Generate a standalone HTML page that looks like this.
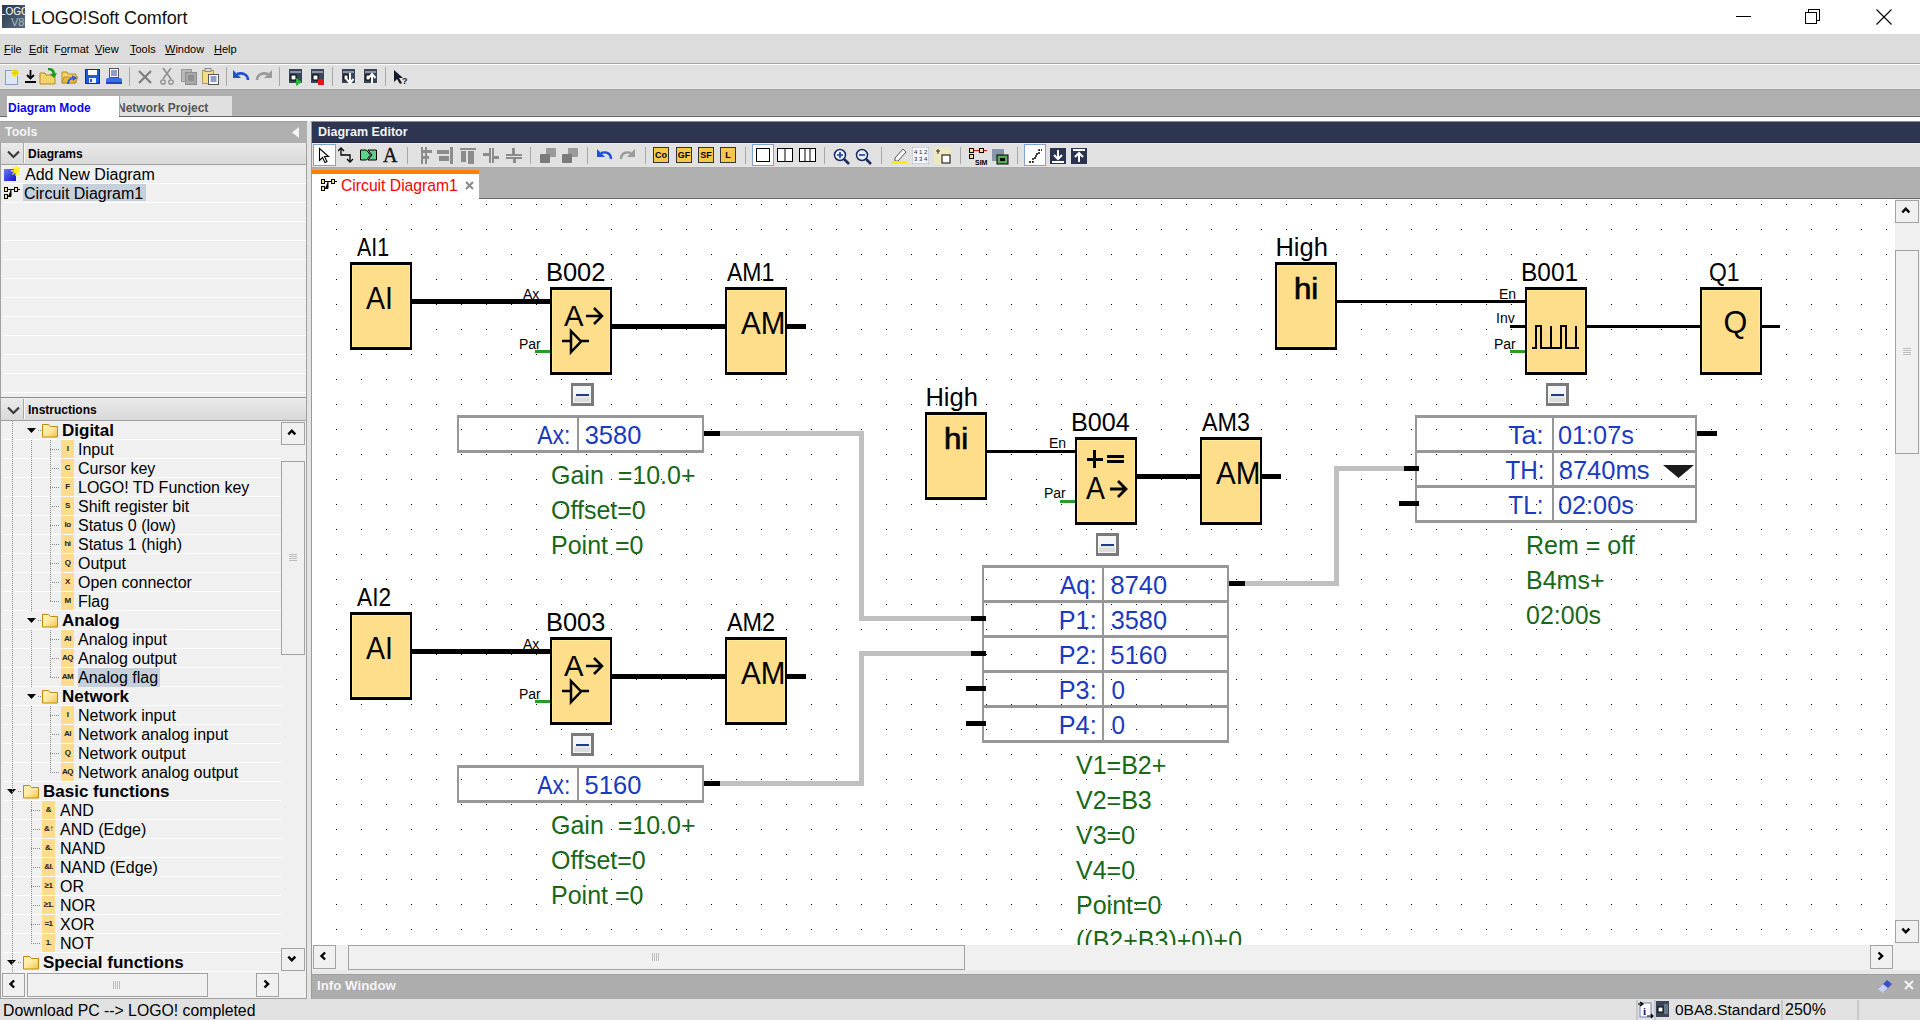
<!DOCTYPE html><html><head><meta charset="utf-8"><style>
*{margin:0;padding:0;box-sizing:border-box}
html,body{width:1920px;height:1020px;overflow:hidden;background:#fff;font-family:"Liberation Sans",sans-serif;}
.a{position:absolute}
.menu{top:34px;height:29px;line-height:29px;font-size:11px;color:#000}
.t16{font-size:16px;line-height:19px;color:#000;white-space:nowrap}
.dv{position:absolute;width:1px;background-image:linear-gradient(#8a8a8a 50%,transparent 50%);background-size:1px 2px}
.dh{position:absolute;height:1px;background-image:linear-gradient(90deg,#8a8a8a 50%,transparent 50%);background-size:2px 1px}
.ico{position:absolute;width:14px;height:18px;background:#ffdb8c;font-size:8px;font-weight:bold;text-align:center;line-height:12px;color:#111}
.sep{position:absolute;width:1px;background:#a8a8a8}
</style></head><body>
<div class="a" style="left:0px;top:0px;width:1920px;height:34px;background:#fff"></div>
<svg class="a" style="left:2px;top:5px" width="23" height="23" viewBox="0 0 23 23">
<defs><linearGradient id="lg1" x1="0" y1="0" x2="1" y2="1"><stop offset="0" stop-color="#24364a"/><stop offset="1" stop-color="#5d6f80"/></linearGradient></defs>
<rect width="23" height="23" fill="url(#lg1)"/>
<text x="-2" y="10" font-size="10" fill="#fff" font-family="Liberation Sans">LOGO</text>
<text x="9" y="21" font-size="11" fill="#aebbc4" font-family="Liberation Sans">V8</text></svg>
<div class="a" style="left:31px;top:7px;white-space:nowrap;font-size:18px;line-height:22px;color:#111;letter-spacing:-0.1px">LOGO!Soft Comfort</div>
<div class="a" style="left:1736px;top:16px;width:15px;height:1px;background:#000"></div>
<svg class="a" style="left:1800px;top:5px" width="24" height="22"><path d="M5.5 7.5h11v11h-11z M8.5 7.5v-3h11v11h-3" fill="none" stroke="#000" stroke-width="1" shape-rendering="crispEdges"/></svg>
<svg class="a" style="left:1876px;top:9px" width="16" height="16"><path d="M0.5 0.5L15.5 15.5M15.5 0.5L0.5 15.5" stroke="#000" stroke-width="1.1"/></svg>
<div class="a" style="left:0px;top:34px;width:1920px;height:29px;background:#dcdcdc"></div>
<div class="a" style="left:4px;top:35px;white-space:nowrap;height:29px;line-height:29px;font-size:11px;color:#000"><span style="text-decoration:underline">F</span>ile</div>
<div class="a" style="left:29px;top:35px;white-space:nowrap;height:29px;line-height:29px;font-size:11px;color:#000"><span style="text-decoration:underline">E</span>dit</div>
<div class="a" style="left:54px;top:35px;white-space:nowrap;height:29px;line-height:29px;font-size:11px;color:#000">F<span style="text-decoration:underline">o</span>rmat</div>
<div class="a" style="left:95px;top:35px;white-space:nowrap;height:29px;line-height:29px;font-size:11px;color:#000"><span style="text-decoration:underline">V</span>iew</div>
<div class="a" style="left:130px;top:35px;white-space:nowrap;height:29px;line-height:29px;font-size:11px;color:#000"><span style="text-decoration:underline">T</span>ools</div>
<div class="a" style="left:165px;top:35px;white-space:nowrap;height:29px;line-height:29px;font-size:11px;color:#000"><span style="text-decoration:underline">W</span>indow</div>
<div class="a" style="left:214px;top:35px;white-space:nowrap;height:29px;line-height:29px;font-size:11px;color:#000"><span style="text-decoration:underline">H</span>elp</div>
<div class="a" style="left:0px;top:63px;width:1920px;height:26px;background:#e1e1e1;border-top:1px solid #a4a4a4"></div>
<div class="a" style="left:0px;top:64px;width:1920px;height:1px;background:#fff"></div>
<div class="a" style="left:0px;top:88px;width:1920px;height:1px;background:#e6e6e6"></div>
<svg class="a" style="left:4px;top:68px" width="17" height="17" viewBox="0 0 17 17"><rect x="1.5" y="2.5" width="12" height="14" fill="#dfe6f5" stroke="#8a9cc0"/><path d="M11 1v8M7 5h8M8.2 2.2l5.6 5.6M13.8 2.2l-5.6 5.6" stroke="#ffe800" stroke-width="1.6"/><path d="M11 2v6M8 5h6" stroke="#c8b000" stroke-width="0.6"/></svg>
<svg class="a" style="left:25px;top:70px" width="11" height="13" viewBox="0 0 11 13"><path d="M5.5 0v8M2 5l3.5 3.5L9 5" fill="none" stroke="#000" stroke-width="1.8"/><rect x="0" y="11" width="11" height="2" fill="#000"/></svg>
<svg class="a" style="left:39px;top:68px" width="18" height="17" viewBox="0 0 18 17"><path d="M1 5h5l1 2h9v9H1z" fill="#f3d46a" stroke="#b48a1e"/><path d="M9 1c4 0 6 2 6 6" fill="none" stroke="#1a9a1a" stroke-width="2.5"/><path d="M11 6l4 4 3-5z" fill="#1a9a1a"/></svg>
<svg class="a" style="left:61px;top:68px" width="18" height="17" viewBox="0 0 18 17"><path d="M1 4h5l1 2h8v9H1z" fill="#f3d46a" stroke="#b48a1e"/><path d="M3 9h14l-3 6H1z" fill="#e8b83c" stroke="#b48a1e" stroke-width="0.8"/><path d="M7 16c0-4 3-6 6-6" fill="none" stroke="#2a5ce0" stroke-width="2.2"/><path d="M11 7l5 3-4 3z" fill="#2a5ce0"/></svg>
<svg class="a" style="left:85px;top:69px" width="15" height="15" viewBox="0 0 15 15"><rect x="0.5" y="0.5" width="14" height="14" fill="#1f5ad8" stroke="#0b3090"/><rect x="3" y="1" width="9" height="5" fill="#fff"/><rect x="4" y="9" width="7" height="5" fill="#e8eefc"/><rect x="5" y="10" width="2" height="3" fill="#1f5ad8"/></svg>
<svg class="a" style="left:106px;top:68px" width="16" height="17" viewBox="0 0 16 17"><rect x="3.5" y="0.5" width="9" height="9" fill="#fff" stroke="#555"/><path d="M5 3h6M5 5h6M5 7h6" stroke="#1a3aa0"/><rect x="0" y="10" width="16" height="6" rx="2" fill="#3a6ee8"/><rect x="0" y="14" width="16" height="2" fill="#1d48b8"/></svg>
<div class="sep" style="left:129px;top:67px;height:19px"></div>
<svg class="a" style="left:138px;top:70px" width="14" height="14" viewBox="0 0 14 14"><path d="M1 1L13 13M13 1L1 13" stroke="#7e7e7e" stroke-width="2.2"/></svg>
<svg class="a" style="left:160px;top:68px" width="14" height="17" viewBox="0 0 14 17"><path d="M3 0l8 11M11 0L3 11" stroke="#8e8e8e" stroke-width="1.6"/><circle cx="3" cy="14" r="2.2" fill="none" stroke="#8e8e8e" stroke-width="1.3"/><circle cx="11" cy="14" r="2.2" fill="none" stroke="#8e8e8e" stroke-width="1.3"/></svg>
<svg class="a" style="left:181px;top:69px" width="16" height="16" viewBox="0 0 16 16"><rect x="0.5" y="0.5" width="10" height="12" fill="#b8b8b8" stroke="#999"/><rect x="4.5" y="3.5" width="11" height="12" fill="#a8a8a8" stroke="#8e8e8e"/><path d="M7 7h6M7 9h6M7 11h6" stroke="#777"/></svg>
<svg class="a" style="left:202px;top:68px" width="17" height="17" viewBox="0 0 17 17"><rect x="0.5" y="2.5" width="11" height="13" fill="#f3dd8a" stroke="#b09a50"/><rect x="3" y="0.5" width="6" height="3" fill="#ddd" stroke="#888"/><rect x="6.5" y="6.5" width="10" height="10" fill="#fff" stroke="#555"/><path d="M8.5 9h6M8.5 11h6M8.5 13h6" stroke="#1a3aa0"/></svg>
<div class="sep" style="left:226px;top:67px;height:19px"></div>
<svg class="a" style="left:233px;top:69px" width="17" height="16" viewBox="0 0 17 16"><path d="M4 5c6-2 11 1 11 6" fill="none" stroke="#2050d8" stroke-width="2.6"/><path d="M0 1v8h8z" fill="#2050d8"/></svg>
<svg class="a" style="left:255px;top:69px" width="17" height="16" viewBox="0 0 17 16"><path d="M13 5c-6-2-11 1-11 6" fill="none" stroke="#9a9a9a" stroke-width="2.6"/><path d="M17 1v8h-8z" fill="#9a9a9a"/></svg>
<div class="sep" style="left:279px;top:67px;height:19px"></div>
<svg class="a" style="left:289px;top:69px" width="14" height="17" viewBox="0 0 14 17"><rect x="0" y="0" width="13" height="14" fill="#3a4658"/><rect x="1" y="2" width="11" height="2" fill="#8895a8"/><rect x="2" y="6" width="5" height="5" fill="#fff" stroke="#000"/><path d="M7 9l6 4-6 4z" fill="#22bb33"/></svg>
<svg class="a" style="left:311px;top:69px" width="14" height="17" viewBox="0 0 14 17"><rect x="0" y="0" width="13" height="14" fill="#3a4658"/><rect x="1" y="2" width="11" height="2" fill="#8895a8"/><rect x="2" y="6" width="5" height="5" fill="#fff" stroke="#000"/><rect x="7" y="10" width="6" height="6" fill="#ee1111"/></svg>
<div class="sep" style="left:332px;top:67px;height:19px"></div>
<svg class="a" style="left:342px;top:69px" width="13" height="16" viewBox="0 0 13 16"><rect x="0" y="0" width="13" height="14" fill="#3a4658"/><rect x="1" y="2" width="11" height="2" fill="#8895a8"/><rect x="2" y="6" width="4" height="5" fill="#fff" stroke="#000"/><path d="M8 4v10M4.5 10l3.5 4 3.5-4" fill="none" stroke="#fff" stroke-width="2"/></svg>
<svg class="a" style="left:364px;top:69px" width="13" height="16" viewBox="0 0 13 16"><rect x="0" y="0" width="13" height="14" fill="#3a4658"/><rect x="1" y="2" width="11" height="2" fill="#8895a8"/><rect x="2" y="6" width="4" height="5" fill="#fff" stroke="#000"/><path d="M8 15V5M4.5 9l3.5-4 3.5 4" fill="none" stroke="#fff" stroke-width="2"/></svg>
<div class="sep" style="left:385px;top:67px;height:19px"></div>
<svg class="a" style="left:393px;top:69px" width="16" height="16" viewBox="0 0 16 16"><path d="M1 1v12l3-3 3 5 2-1-3-5h4z" fill="#101830"/><text x="9" y="15" font-size="9" font-weight="bold" font-family="Liberation Sans" fill="#101830">?</text></svg>
<div class="a" style="left:0px;top:89px;width:1920px;height:28px;background:#afafaf;border-top:1px solid #a0a0a0;border-bottom:1px solid #666"></div>
<div class="a" style="left:0px;top:115px;width:1920px;height:1px;background:#b4b4b4"></div>
<div class="a" style="left:7px;top:96px;width:112px;height:21px;background:#fff"></div>
<div class="a" style="left:8px;top:100px;white-space:nowrap;font-size:12px;font-weight:bold;color:#0a0af0;line-height:16px">Diagram Mode</div>
<div class="a" style="left:119px;top:96px;width:113px;height:20px;background:#e0e0e0;border-left:1px solid #a8a8a8;overflow:hidden"><div style="margin-left:-3px;margin-top:4px;font-size:12px;font-weight:bold;color:#555;line-height:16px;white-space:nowrap">Network Project</div></div>
<div class="a" style="left:0px;top:117px;width:1920px;height:4px;background:#fff"></div>
<div class="a" style="left:0px;top:121px;width:307px;height:878px;background:#f0f0f0;border-left:1px solid #a0a0a0;border-right:1px solid #a0a0a0"></div>
<div class="a" style="left:307px;top:121px;width:5px;height:878px;background:#e4e4e4;border-right:1px solid #9a9a9a"></div>
<div class="a" style="left:0px;top:121px;width:307px;height:22px;background:#afafaf;border-top:1px solid #a0a0a0"></div>
<div class="a" style="left:5px;top:124px;white-space:nowrap;font-size:12.5px;font-weight:bold;color:#f4f4f4;line-height:16px">Tools</div>
<svg class="a" style="left:292px;top:127px" width="8" height="11" viewBox="0 0 8 11"><path d="M7 0v11L0 5.5z" fill="#f4f4f4"/></svg>
<div class="a" style="left:1px;top:143px;width:305px;height:22px;background:linear-gradient(#eaeaea,#d9d9d9);border-bottom:1px solid #a0a0a0"></div>
<div class="a" style="left:23px;top:143px;width:1px;height:20px;background:#a8a8a8"></div>
<div class="a" style="left:24px;top:143px;width:1px;height:20px;background:#fafafa"></div>
<svg class="a" style="left:7px;top:150px" width="13" height="9" viewBox="0 0 13 9"><path d="M1 1.5l5.5 5.5 5.5-5.5" fill="none" stroke="#3a3a3a" stroke-width="2.2"/></svg>
<div class="a" style="left:28px;top:146px;white-space:nowrap;font-size:12px;font-weight:bold;color:#000;line-height:16px">Diagrams</div>
<div class="a" style="left:4px;top:183px;width:302px;height:1px;background:#fff"></div>
<div class="a" style="left:4px;top:202px;width:302px;height:1px;background:#fff"></div>
<div class="a" style="left:4px;top:221px;width:302px;height:1px;background:#fff"></div>
<div class="a" style="left:4px;top:240px;width:302px;height:1px;background:#fff"></div>
<div class="a" style="left:4px;top:259px;width:302px;height:1px;background:#fff"></div>
<div class="a" style="left:4px;top:278px;width:302px;height:1px;background:#fff"></div>
<div class="a" style="left:4px;top:297px;width:302px;height:1px;background:#fff"></div>
<div class="a" style="left:4px;top:316px;width:302px;height:1px;background:#fff"></div>
<div class="a" style="left:4px;top:335px;width:302px;height:1px;background:#fff"></div>
<div class="a" style="left:4px;top:354px;width:302px;height:1px;background:#fff"></div>
<div class="a" style="left:4px;top:373px;width:302px;height:1px;background:#fff"></div>
<div class="a" style="left:4px;top:392px;width:302px;height:1px;background:#fff"></div>
<svg class="a" style="left:4px;top:166px" width="16" height="16" viewBox="0 0 16 16"><defs><linearGradient id="bl" x1="0" y1="0" x2="1" y2="1"><stop offset="0" stop-color="#6a7cff"/><stop offset="1" stop-color="#1010c0"/></linearGradient></defs><rect x="0" y="3" width="12" height="12" fill="url(#bl)"/><path d="M12 0v10M7 5h10M8.5 1.5l7 7M15.5 1.5l-7 7" stroke="#ffee00" stroke-width="1.4"/></svg>
<div class="a" style="left:25px;top:165px;white-space:nowrap;font-size:16px;line-height:19px;color:#000">Add New Diagram</div>
<div class="a" style="left:23px;top:184px;width:123px;height:17px;background:#c5d0db"></div>
<svg class="a" style="left:4px;top:187px" width="16" height="12" viewBox="0 0 16 12"><rect x="0.5" y="0.5" width="3" height="4" fill="#ffe08a" stroke="#000"/><rect x="0.5" y="7.5" width="3" height="4" fill="#ffe08a" stroke="#000"/><rect x="10.5" y="0.5" width="3" height="4" fill="#ffe08a" stroke="#000"/><path d="M4 2.5h6M7 2.5v7H4M14 2.5h2" stroke="#000"/></svg>
<div class="a" style="left:24px;top:184px;white-space:nowrap;font-size:16px;line-height:19px;color:#000">Circuit Diagram1</div>
<div class="a" style="left:1px;top:397px;width:305px;height:1px;background:#8c8c8c"></div>
<div class="a" style="left:1px;top:399px;width:305px;height:22px;background:linear-gradient(#eaeaea,#d9d9d9);border-bottom:1px solid #a0a0a0"></div>
<div class="a" style="left:23px;top:399px;width:1px;height:20px;background:#a8a8a8"></div>
<div class="a" style="left:24px;top:399px;width:1px;height:20px;background:#fafafa"></div>
<svg class="a" style="left:7px;top:406px" width="13" height="9" viewBox="0 0 13 9"><path d="M1 1.5l5.5 5.5 5.5-5.5" fill="none" stroke="#3a3a3a" stroke-width="2.2"/></svg>
<div class="a" style="left:28px;top:402px;white-space:nowrap;font-size:12px;font-weight:bold;color:#000;line-height:16px">Instructions</div>
<div class="a" style="left:1px;top:421px;width:280px;height:551px;overflow:hidden">
<div class="a" style="left:3px;top:18px;width:277px;height:1px;background:#fff"></div>
<svg class="a" style="left:26px;top:7px" width="9" height="6"><path d="M0 0h9L4.5 5z" fill="#000"/></svg>
<div class="dh" style="left:37px;top:9px;width:4px"></div>
<svg class="a" style="left:41px;top:2px" width="16" height="15"><defs><linearGradient id="fg0" x1="0" y1="0" x2="1" y2="1"><stop offset="0" stop-color="#fff2b8"/><stop offset="0.5" stop-color="#ffe9a0"/><stop offset="1" stop-color="#f0c040"/></linearGradient></defs><path d="M0.5 1.5h6l2 2h7v10.5h-15z" fill="url(#fg0)" stroke="#c08a10"/></svg>
<div class="a" style="left:61px;top:0px;font-size:17px;font-weight:bold;line-height:19px;color:#000;white-space:nowrap">Digital</div>
<div class="a" style="left:3px;top:37px;width:277px;height:1px;background:#fff"></div>
<div class="a" style="left:60px;top:19px;width:13px;height:18px;background:#ffdb8c"></div>
<div class="a" style="left:59px;top:22px;width:15px;text-align:center;font-size:8px;font-weight:bold;line-height:12px;color:#222;white-space:nowrap;letter-spacing:-0.5px">I</div>
<div class="dh" style="left:49px;top:28px;width:10px"></div>
<div class="a" style="left:77px;top:19px;font-size:16px;line-height:19px;color:#000;white-space:nowrap;padding-right:2px">Input</div>
<div class="a" style="left:3px;top:56px;width:277px;height:1px;background:#fff"></div>
<div class="a" style="left:60px;top:38px;width:13px;height:18px;background:#ffdb8c"></div>
<div class="a" style="left:59px;top:41px;width:15px;text-align:center;font-size:8px;font-weight:bold;line-height:12px;color:#222;white-space:nowrap;letter-spacing:-0.5px">C</div>
<div class="dh" style="left:49px;top:47px;width:10px"></div>
<div class="a" style="left:77px;top:38px;font-size:16px;line-height:19px;color:#000;white-space:nowrap;padding-right:2px">Cursor key</div>
<div class="a" style="left:3px;top:75px;width:277px;height:1px;background:#fff"></div>
<div class="a" style="left:60px;top:57px;width:13px;height:18px;background:#ffdb8c"></div>
<div class="a" style="left:59px;top:60px;width:15px;text-align:center;font-size:8px;font-weight:bold;line-height:12px;color:#222;white-space:nowrap;letter-spacing:-0.5px">F</div>
<div class="dh" style="left:49px;top:66px;width:10px"></div>
<div class="a" style="left:77px;top:57px;font-size:16px;line-height:19px;color:#000;white-space:nowrap;padding-right:2px">LOGO! TD Function key</div>
<div class="a" style="left:3px;top:94px;width:277px;height:1px;background:#fff"></div>
<div class="a" style="left:60px;top:76px;width:13px;height:18px;background:#ffdb8c"></div>
<div class="a" style="left:59px;top:79px;width:15px;text-align:center;font-size:8px;font-weight:bold;line-height:12px;color:#222;white-space:nowrap;letter-spacing:-0.5px">S</div>
<div class="dh" style="left:49px;top:85px;width:10px"></div>
<div class="a" style="left:77px;top:76px;font-size:16px;line-height:19px;color:#000;white-space:nowrap;padding-right:2px">Shift register bit</div>
<div class="a" style="left:3px;top:113px;width:277px;height:1px;background:#fff"></div>
<div class="a" style="left:60px;top:95px;width:13px;height:18px;background:#ffdb8c"></div>
<div class="a" style="left:59px;top:98px;width:15px;text-align:center;font-size:8px;font-weight:bold;line-height:12px;color:#222;white-space:nowrap;letter-spacing:-0.5px">lo</div>
<div class="dh" style="left:49px;top:104px;width:10px"></div>
<div class="a" style="left:77px;top:95px;font-size:16px;line-height:19px;color:#000;white-space:nowrap;padding-right:2px">Status 0 (low)</div>
<div class="a" style="left:3px;top:132px;width:277px;height:1px;background:#fff"></div>
<div class="a" style="left:60px;top:114px;width:13px;height:18px;background:#ffdb8c"></div>
<div class="a" style="left:59px;top:117px;width:15px;text-align:center;font-size:8px;font-weight:bold;line-height:12px;color:#222;white-space:nowrap;letter-spacing:-0.5px">hi</div>
<div class="dh" style="left:49px;top:123px;width:10px"></div>
<div class="a" style="left:77px;top:114px;font-size:16px;line-height:19px;color:#000;white-space:nowrap;padding-right:2px">Status 1 (high)</div>
<div class="a" style="left:3px;top:151px;width:277px;height:1px;background:#fff"></div>
<div class="a" style="left:60px;top:133px;width:13px;height:18px;background:#ffdb8c"></div>
<div class="a" style="left:59px;top:136px;width:15px;text-align:center;font-size:8px;font-weight:bold;line-height:12px;color:#222;white-space:nowrap;letter-spacing:-0.5px">Q</div>
<div class="dh" style="left:49px;top:142px;width:10px"></div>
<div class="a" style="left:77px;top:133px;font-size:16px;line-height:19px;color:#000;white-space:nowrap;padding-right:2px">Output</div>
<div class="a" style="left:3px;top:170px;width:277px;height:1px;background:#fff"></div>
<div class="a" style="left:60px;top:152px;width:13px;height:18px;background:#ffdb8c"></div>
<div class="a" style="left:59px;top:155px;width:15px;text-align:center;font-size:8px;font-weight:bold;line-height:12px;color:#222;white-space:nowrap;letter-spacing:-0.5px">X</div>
<div class="dh" style="left:49px;top:161px;width:10px"></div>
<div class="a" style="left:77px;top:152px;font-size:16px;line-height:19px;color:#000;white-space:nowrap;padding-right:2px">Open connector</div>
<div class="a" style="left:3px;top:189px;width:277px;height:1px;background:#fff"></div>
<div class="a" style="left:60px;top:171px;width:13px;height:18px;background:#ffdb8c"></div>
<div class="a" style="left:59px;top:174px;width:15px;text-align:center;font-size:8px;font-weight:bold;line-height:12px;color:#222;white-space:nowrap;letter-spacing:-0.5px">M</div>
<div class="dh" style="left:49px;top:180px;width:10px"></div>
<div class="a" style="left:77px;top:171px;font-size:16px;line-height:19px;color:#000;white-space:nowrap;padding-right:2px">Flag</div>
<div class="a" style="left:3px;top:208px;width:277px;height:1px;background:#fff"></div>
<svg class="a" style="left:26px;top:197px" width="9" height="6"><path d="M0 0h9L4.5 5z" fill="#000"/></svg>
<div class="dh" style="left:37px;top:199px;width:4px"></div>
<svg class="a" style="left:41px;top:192px" width="16" height="15"><defs><linearGradient id="fg10" x1="0" y1="0" x2="1" y2="1"><stop offset="0" stop-color="#fff2b8"/><stop offset="0.5" stop-color="#ffe9a0"/><stop offset="1" stop-color="#f0c040"/></linearGradient></defs><path d="M0.5 1.5h6l2 2h7v10.5h-15z" fill="url(#fg10)" stroke="#c08a10"/></svg>
<div class="a" style="left:61px;top:190px;font-size:17px;font-weight:bold;line-height:19px;color:#000;white-space:nowrap">Analog</div>
<div class="a" style="left:3px;top:227px;width:277px;height:1px;background:#fff"></div>
<div class="a" style="left:60px;top:209px;width:13px;height:18px;background:#ffdb8c"></div>
<div class="a" style="left:59px;top:212px;width:15px;text-align:center;font-size:8px;font-weight:bold;line-height:12px;color:#222;white-space:nowrap;letter-spacing:-0.5px">AI</div>
<div class="dh" style="left:49px;top:218px;width:10px"></div>
<div class="a" style="left:77px;top:209px;font-size:16px;line-height:19px;color:#000;white-space:nowrap;padding-right:2px">Analog input</div>
<div class="a" style="left:3px;top:246px;width:277px;height:1px;background:#fff"></div>
<div class="a" style="left:60px;top:228px;width:13px;height:18px;background:#ffdb8c"></div>
<div class="a" style="left:59px;top:231px;width:15px;text-align:center;font-size:8px;font-weight:bold;line-height:12px;color:#222;white-space:nowrap;letter-spacing:-0.5px">AQ</div>
<div class="dh" style="left:49px;top:237px;width:10px"></div>
<div class="a" style="left:77px;top:228px;font-size:16px;line-height:19px;color:#000;white-space:nowrap;padding-right:2px">Analog output</div>
<div class="a" style="left:3px;top:265px;width:277px;height:1px;background:#fff"></div>
<div class="a" style="left:60px;top:247px;width:13px;height:18px;background:#ffdb8c"></div>
<div class="a" style="left:59px;top:250px;width:15px;text-align:center;font-size:8px;font-weight:bold;line-height:12px;color:#222;white-space:nowrap;letter-spacing:-0.5px">AM</div>
<div class="dh" style="left:49px;top:256px;width:10px"></div>
<div class="a" style="left:77px;top:247px;font-size:16px;line-height:19px;color:#000;white-space:nowrap;background:#c5d0db;padding-right:2px">Analog flag</div>
<div class="a" style="left:3px;top:284px;width:277px;height:1px;background:#fff"></div>
<svg class="a" style="left:26px;top:273px" width="9" height="6"><path d="M0 0h9L4.5 5z" fill="#000"/></svg>
<div class="dh" style="left:37px;top:275px;width:4px"></div>
<svg class="a" style="left:41px;top:268px" width="16" height="15"><defs><linearGradient id="fg14" x1="0" y1="0" x2="1" y2="1"><stop offset="0" stop-color="#fff2b8"/><stop offset="0.5" stop-color="#ffe9a0"/><stop offset="1" stop-color="#f0c040"/></linearGradient></defs><path d="M0.5 1.5h6l2 2h7v10.5h-15z" fill="url(#fg14)" stroke="#c08a10"/></svg>
<div class="a" style="left:61px;top:266px;font-size:17px;font-weight:bold;line-height:19px;color:#000;white-space:nowrap">Network</div>
<div class="a" style="left:3px;top:303px;width:277px;height:1px;background:#fff"></div>
<div class="a" style="left:60px;top:285px;width:13px;height:18px;background:#ffdb8c"></div>
<div class="a" style="left:59px;top:288px;width:15px;text-align:center;font-size:8px;font-weight:bold;line-height:12px;color:#222;white-space:nowrap;letter-spacing:-0.5px">I</div>
<div class="dh" style="left:49px;top:294px;width:10px"></div>
<div class="a" style="left:77px;top:285px;font-size:16px;line-height:19px;color:#000;white-space:nowrap;padding-right:2px">Network input</div>
<div class="a" style="left:3px;top:322px;width:277px;height:1px;background:#fff"></div>
<div class="a" style="left:60px;top:304px;width:13px;height:18px;background:#ffdb8c"></div>
<div class="a" style="left:59px;top:307px;width:15px;text-align:center;font-size:8px;font-weight:bold;line-height:12px;color:#222;white-space:nowrap;letter-spacing:-0.5px">AI</div>
<div class="dh" style="left:49px;top:313px;width:10px"></div>
<div class="a" style="left:77px;top:304px;font-size:16px;line-height:19px;color:#000;white-space:nowrap;padding-right:2px">Network analog input</div>
<div class="a" style="left:3px;top:341px;width:277px;height:1px;background:#fff"></div>
<div class="a" style="left:60px;top:323px;width:13px;height:18px;background:#ffdb8c"></div>
<div class="a" style="left:59px;top:326px;width:15px;text-align:center;font-size:8px;font-weight:bold;line-height:12px;color:#222;white-space:nowrap;letter-spacing:-0.5px">Q</div>
<div class="dh" style="left:49px;top:332px;width:10px"></div>
<div class="a" style="left:77px;top:323px;font-size:16px;line-height:19px;color:#000;white-space:nowrap;padding-right:2px">Network output</div>
<div class="a" style="left:3px;top:360px;width:277px;height:1px;background:#fff"></div>
<div class="a" style="left:60px;top:342px;width:13px;height:18px;background:#ffdb8c"></div>
<div class="a" style="left:59px;top:345px;width:15px;text-align:center;font-size:8px;font-weight:bold;line-height:12px;color:#222;white-space:nowrap;letter-spacing:-0.5px">AQ</div>
<div class="dh" style="left:49px;top:351px;width:10px"></div>
<div class="a" style="left:77px;top:342px;font-size:16px;line-height:19px;color:#000;white-space:nowrap;padding-right:2px">Network analog output</div>
<div class="a" style="left:3px;top:379px;width:277px;height:1px;background:#fff"></div>
<svg class="a" style="left:6px;top:368px" width="9" height="6"><path d="M0 0h9L4.5 5z" fill="#000"/></svg>
<div class="dh" style="left:17px;top:370px;width:4px"></div>
<svg class="a" style="left:22px;top:363px" width="16" height="15"><defs><linearGradient id="fg19" x1="0" y1="0" x2="1" y2="1"><stop offset="0" stop-color="#fff2b8"/><stop offset="0.5" stop-color="#ffe9a0"/><stop offset="1" stop-color="#f0c040"/></linearGradient></defs><path d="M0.5 1.5h6l2 2h7v10.5h-15z" fill="url(#fg19)" stroke="#c08a10"/></svg>
<div class="a" style="left:42px;top:361px;font-size:17px;font-weight:bold;line-height:19px;color:#000;white-space:nowrap">Basic functions</div>
<div class="a" style="left:3px;top:398px;width:277px;height:1px;background:#fff"></div>
<div class="a" style="left:41px;top:380px;width:13px;height:18px;background:#ffdb8c"></div>
<div class="a" style="left:40px;top:383px;width:15px;text-align:center;font-size:8px;font-weight:bold;line-height:12px;color:#222;white-space:nowrap;letter-spacing:-0.5px">&amp;</div>
<div class="dh" style="left:30px;top:389px;width:10px"></div>
<div class="a" style="left:59px;top:380px;font-size:16px;line-height:19px;color:#000;white-space:nowrap;padding-right:2px">AND</div>
<div class="a" style="left:3px;top:417px;width:277px;height:1px;background:#fff"></div>
<div class="a" style="left:41px;top:399px;width:13px;height:18px;background:#ffdb8c"></div>
<div class="a" style="left:40px;top:402px;width:15px;text-align:center;font-size:8px;font-weight:bold;line-height:12px;color:#222;white-space:nowrap;letter-spacing:-0.5px">&amp;&#8593;</div>
<div class="dh" style="left:30px;top:408px;width:10px"></div>
<div class="a" style="left:59px;top:399px;font-size:16px;line-height:19px;color:#000;white-space:nowrap;padding-right:2px">AND (Edge)</div>
<div class="a" style="left:3px;top:436px;width:277px;height:1px;background:#fff"></div>
<div class="a" style="left:41px;top:418px;width:13px;height:18px;background:#ffdb8c"></div>
<div class="a" style="left:40px;top:421px;width:15px;text-align:center;font-size:8px;font-weight:bold;line-height:12px;color:#222;white-space:nowrap;letter-spacing:-0.5px">&amp;.</div>
<div class="dh" style="left:30px;top:427px;width:10px"></div>
<div class="a" style="left:59px;top:418px;font-size:16px;line-height:19px;color:#000;white-space:nowrap;padding-right:2px">NAND</div>
<div class="a" style="left:3px;top:455px;width:277px;height:1px;background:#fff"></div>
<div class="a" style="left:41px;top:437px;width:13px;height:18px;background:#ffdb8c"></div>
<div class="a" style="left:40px;top:440px;width:15px;text-align:center;font-size:8px;font-weight:bold;line-height:12px;color:#222;white-space:nowrap;letter-spacing:-0.5px">&amp;I.</div>
<div class="dh" style="left:30px;top:446px;width:10px"></div>
<div class="a" style="left:59px;top:437px;font-size:16px;line-height:19px;color:#000;white-space:nowrap;padding-right:2px">NAND (Edge)</div>
<div class="a" style="left:3px;top:474px;width:277px;height:1px;background:#fff"></div>
<div class="a" style="left:41px;top:456px;width:13px;height:18px;background:#ffdb8c"></div>
<div class="a" style="left:40px;top:459px;width:15px;text-align:center;font-size:8px;font-weight:bold;line-height:12px;color:#222;white-space:nowrap;letter-spacing:-0.5px">&#8805;1</div>
<div class="dh" style="left:30px;top:465px;width:10px"></div>
<div class="a" style="left:59px;top:456px;font-size:16px;line-height:19px;color:#000;white-space:nowrap;padding-right:2px">OR</div>
<div class="a" style="left:3px;top:493px;width:277px;height:1px;background:#fff"></div>
<div class="a" style="left:41px;top:475px;width:13px;height:18px;background:#ffdb8c"></div>
<div class="a" style="left:40px;top:478px;width:15px;text-align:center;font-size:8px;font-weight:bold;line-height:12px;color:#222;white-space:nowrap;letter-spacing:-0.5px">&#8805;1.</div>
<div class="dh" style="left:30px;top:484px;width:10px"></div>
<div class="a" style="left:59px;top:475px;font-size:16px;line-height:19px;color:#000;white-space:nowrap;padding-right:2px">NOR</div>
<div class="a" style="left:3px;top:512px;width:277px;height:1px;background:#fff"></div>
<div class="a" style="left:41px;top:494px;width:13px;height:18px;background:#ffdb8c"></div>
<div class="a" style="left:40px;top:497px;width:15px;text-align:center;font-size:8px;font-weight:bold;line-height:12px;color:#222;white-space:nowrap;letter-spacing:-0.5px">=1</div>
<div class="dh" style="left:30px;top:503px;width:10px"></div>
<div class="a" style="left:59px;top:494px;font-size:16px;line-height:19px;color:#000;white-space:nowrap;padding-right:2px">XOR</div>
<div class="a" style="left:3px;top:531px;width:277px;height:1px;background:#fff"></div>
<div class="a" style="left:41px;top:513px;width:13px;height:18px;background:#ffdb8c"></div>
<div class="a" style="left:40px;top:516px;width:15px;text-align:center;font-size:8px;font-weight:bold;line-height:12px;color:#222;white-space:nowrap;letter-spacing:-0.5px">1.</div>
<div class="dh" style="left:30px;top:522px;width:10px"></div>
<div class="a" style="left:59px;top:513px;font-size:16px;line-height:19px;color:#000;white-space:nowrap;padding-right:2px">NOT</div>
<div class="a" style="left:3px;top:550px;width:277px;height:1px;background:#fff"></div>
<svg class="a" style="left:6px;top:539px" width="9" height="6"><path d="M0 0h9L4.5 5z" fill="#000"/></svg>
<div class="dh" style="left:17px;top:541px;width:4px"></div>
<svg class="a" style="left:22px;top:534px" width="16" height="15"><defs><linearGradient id="fg28" x1="0" y1="0" x2="1" y2="1"><stop offset="0" stop-color="#fff2b8"/><stop offset="0.5" stop-color="#ffe9a0"/><stop offset="1" stop-color="#f0c040"/></linearGradient></defs><path d="M0.5 1.5h6l2 2h7v10.5h-15z" fill="url(#fg28)" stroke="#c08a10"/></svg>
<div class="a" style="left:42px;top:532px;font-size:17px;font-weight:bold;line-height:19px;color:#000;white-space:nowrap">Special functions</div>
<div class="dv" style="left:11px;top:0px;height:551px"></div>
<div class="dv" style="left:30px;top:19px;height:171px"></div>
<div class="dv" style="left:30px;top:209px;height:57px"></div>
<div class="dv" style="left:30px;top:285px;height:76px"></div>
<div class="dv" style="left:49px;top:19px;height:162px"></div>
<div class="dv" style="left:49px;top:209px;height:48px"></div>
<div class="dv" style="left:49px;top:285px;height:67px"></div>
<div class="dv" style="left:30px;top:380px;height:143px"></div>
</div>
<div class="a" style="left:281px;top:422px;width:24px;height:23px;background:#f0f0f0;border:1px solid #a2a2a2"></div>
<svg class="a" style="left:281px;top:422px" width="24" height="23"><path transform="translate(10.8 10.5)" d="M-3.5 1.8L0 -1.8L3.5 1.8" fill="none" stroke="#000" stroke-width="2.4"/></svg>
<div class="a" style="left:281px;top:461px;width:24px;height:194px;background:#f0f0f0;border:1px solid #a2a2a2"></div>
<div class="a" style="left:289px;top:554px;width:8px;height:1px;background:#bdbdbd"></div>
<div class="a" style="left:289px;top:556px;width:8px;height:1px;background:#bdbdbd"></div>
<div class="a" style="left:289px;top:558px;width:8px;height:1px;background:#bdbdbd"></div>
<div class="a" style="left:289px;top:560px;width:8px;height:1px;background:#bdbdbd"></div>
<div class="a" style="left:281px;top:948px;width:24px;height:23px;background:#f0f0f0;border:1px solid #a2a2a2"></div>
<svg class="a" style="left:281px;top:948px" width="24" height="23"><path transform="translate(10.8 10.5)" d="M-3.5 -1.8L0 1.8L3.5 -1.8" fill="none" stroke="#000" stroke-width="2.4"/></svg>
<div class="a" style="left:2px;top:973px;width:23px;height:24px;background:#f0f0f0;border:1px solid #a2a2a2"></div>
<svg class="a" style="left:2px;top:973px" width="23" height="24"><path transform="translate(10.3 11.0)" d="M1.8 -3.5L-1.8 0L1.8 3.5" fill="none" stroke="#000" stroke-width="2.4"/></svg>
<div class="a" style="left:27px;top:973px;width:181px;height:24px;background:#f0f0f0;border:1px solid #a2a2a2"></div>
<div class="a" style="left:113px;top:981px;width:1px;height:8px;background:#bdbdbd"></div>
<div class="a" style="left:115px;top:981px;width:1px;height:8px;background:#bdbdbd"></div>
<div class="a" style="left:117px;top:981px;width:1px;height:8px;background:#bdbdbd"></div>
<div class="a" style="left:119px;top:981px;width:1px;height:8px;background:#bdbdbd"></div>
<div class="a" style="left:256px;top:973px;width:23px;height:24px;background:#f0f0f0;border:1px solid #a2a2a2"></div>
<svg class="a" style="left:256px;top:973px" width="23" height="24"><path transform="translate(10.3 11.0)" d="M-1.8 -3.5L1.8 0L-1.8 3.5" fill="none" stroke="#000" stroke-width="2.4"/></svg>
<div class="a" style="left:0px;top:998px;width:307px;height:1px;background:#a0a0a0"></div>
<div class="a" style="left:0px;top:999px;width:1920px;height:21px;background:#e1e1e1"></div>
<div class="a" style="left:3px;top:1001px;white-space:nowrap;font-size:15.8px;line-height:19px;color:#000">Download PC --&gt; LOGO! completed</div>
<div class="a" style="left:1636px;top:1000px;width:2px;height:20px;background:#c8c8c8"></div>
<div class="a" style="left:1654px;top:1000px;width:2px;height:20px;background:#c8c8c8"></div>
<div class="a" style="left:1781px;top:1000px;width:2px;height:20px;background:#c8c8c8"></div>
<div class="a" style="left:1857px;top:1000px;width:2px;height:20px;background:#c8c8c8"></div>
<svg class="a" style="left:1637px;top:1000px" width="17" height="19" viewBox="0 0 17 19"><rect x="3" y="3" width="11" height="14" fill="#fff" stroke="#7080c0"/><text x="6" y="15" font-size="11" font-weight="bold" font-family="Liberation Serif" fill="#102060">i</text><path d="M1 4h5M3 2l3 2-3 2M10 16h6M14 14l2 2-2 2" stroke="#000" stroke-width="1.2" fill="none"/></svg>
<svg class="a" style="left:1656px;top:1001px" width="14" height="17" viewBox="0 0 14 17"><rect x="0" y="0" width="13" height="16" fill="#3a4658"/><rect x="2" y="6" width="5" height="5" fill="#fff" stroke="#000"/><rect x="8" y="3" width="4" height="10" fill="#6a7788"/></svg>
<div class="a" style="left:1675px;top:1000px;white-space:nowrap;font-size:15.5px;line-height:19px;color:#000">0BA8.Standard</div>
<div class="a" style="left:1785px;top:1000px;white-space:nowrap;font-size:16px;line-height:19px;color:#000">250%</div>
<div class="a" style="left:312px;top:121px;width:1608px;height:1px;background:#8a8f9c"></div>
<div class="a" style="left:312px;top:122px;width:1608px;height:21px;background:#2d3550"></div>
<div class="a" style="left:312px;top:142px;width:1608px;height:1px;background:#222a48"></div>
<div class="a" style="left:318px;top:124px;white-space:nowrap;font-size:12.5px;font-weight:bold;color:#f4f4f4;line-height:16px">Diagram Editor</div>
<div class="a" style="left:312px;top:143px;width:1608px;height:24px;background:#e1e1e1;border-top:1px solid #eeeeea"></div>
<div class="a" style="left:312px;top:166px;width:1608px;height:1px;background:#e4e4e4"></div>
<div class="a" style="left:312px;top:167px;width:1608px;height:32px;background:#afafaf;border-top:1px solid #acacac;border-bottom:1px solid #666"></div>
<div class="a" style="left:312px;top:197px;width:1608px;height:1px;background:#b4b4b4"></div>
<div class="a" style="left:312px;top:170px;width:167px;height:29px;background:#fff"></div>
<div class="a" style="left:312px;top:170px;width:167px;height:4px;background:#ff8000"></div>
<svg class="a" style="left:321px;top:179px" width="16" height="13" viewBox="0 0 16 13"><rect x="0.5" y="0.5" width="3" height="4" fill="#ffe08a" stroke="#000"/><rect x="0.5" y="7.5" width="3" height="4" fill="#ffe08a" stroke="#000"/><rect x="10.5" y="0.5" width="3" height="4" fill="#ffe08a" stroke="#000"/><path d="M4 2.5h6M7 2.5v7H4M14 2.5h2" stroke="#000"/></svg>
<div class="a" style="left:341px;top:176px;white-space:nowrap;font-size:15.7px;line-height:19px;color:#ff0000">Circuit Diagram1</div>
<svg class="a" style="left:465px;top:181px" width="9" height="9" viewBox="0 0 9 9"><path d="M1 1L8 8M8 1L1 8" stroke="#888" stroke-width="2"/></svg>
<div class="a" style="left:313px;top:144px;width:23px;height:22px;background:#fff;border:1px solid #7fa3cf"></div>
<svg class="a" style="left:318px;top:147px" width="13" height="17" viewBox="0 0 13 17"><path d="M1.5 1.5v12l3-3 2.5 5 2-1-2.5-5h4z" fill="#fff" stroke="#000" stroke-width="1.1"/></svg>
<svg class="a" style="left:338px;top:147px" width="16" height="16" viewBox="0 0 16 16"><path d="M3 1v7h9v7" fill="none" stroke="#000" stroke-width="1.3"/><path d="M0 4l3-3 3 3M9 12l3 3 3-3" fill="none" stroke="#000" stroke-width="1.3"/></svg>
<svg class="a" style="left:360px;top:149px" width="17" height="12" viewBox="0 0 17 12"><path d="M0.5 1h6l4 5-4 5h-6z" fill="#5ed08a" stroke="#000"/><path d="M8 1h8.5v10H8l4-5z" fill="#5ed08a" stroke="#000"/></svg>
<div class="a" style="left:383px;top:145px;white-space:nowrap;font-family:&quot;Liberation Serif&quot;,serif;font-size:20px;line-height:20px;color:#111;-webkit-text-stroke:0.4px #111">A</div>
<div class="a" style="left:407px;top:147px;width:1px;height:17px;background:#a8a8a8"></div>
<svg class="a" style="left:418px;top:147px" width="16" height="17" viewBox="0 0 16 17"><rect x="3" y="0" width="2" height="17" fill="#8c8c8c"/><rect x="7" y="0" width="2" height="17" fill="#8c8c8c"/><rect x="3" y="3" width="11" height="3" fill="#8c8c8c"/><rect x="3" y="9" width="8" height="3" fill="#8c8c8c"/></svg>
<svg class="a" style="left:437px;top:147px" width="17" height="17" viewBox="0 0 17 17"><rect x="0" y="3" width="12" height="4" fill="#8c8c8c"/><rect x="2" y="9" width="10" height="5" fill="#8c8c8c"/><rect x="13" y="0" width="3" height="17" fill="#8c8c8c"/></svg>
<svg class="a" style="left:460px;top:147px" width="16" height="17" viewBox="0 0 16 17"><rect x="0" y="1" width="16" height="2" fill="#8c8c8c"/><rect x="1" y="4" width="5" height="11" fill="#8c8c8c"/><rect x="8" y="4" width="6" height="13" fill="#8c8c8c"/></svg>
<svg class="a" style="left:483px;top:147px" width="16" height="17" viewBox="0 0 16 17"><rect x="6" y="1" width="2" height="15" fill="#8c8c8c"/><rect x="9" y="1" width="2" height="15" fill="#8c8c8c"/><rect x="0" y="6" width="6" height="3" fill="#8c8c8c"/><rect x="11" y="9" width="5" height="3" fill="#8c8c8c"/></svg>
<svg class="a" style="left:506px;top:147px" width="16" height="17" viewBox="0 0 16 17"><rect x="0" y="7" width="16" height="2" fill="#8c8c8c"/><rect x="0" y="10" width="16" height="2" fill="#8c8c8c"/><rect x="6" y="1" width="3" height="6" fill="#8c8c8c"/><rect x="7" y="12" width="3" height="4" fill="#8c8c8c"/></svg>
<div class="a" style="left:530px;top:147px;width:1px;height:17px;background:#a8a8a8"></div>
<svg class="a" style="left:540px;top:148px" width="17" height="16" viewBox="0 0 17 16"><rect x="6" y="0" width="10" height="9" rx="1" fill="#9a9a9a"/><rect x="0" y="6" width="10" height="9" rx="1" fill="#7a7a7a"/></svg>
<svg class="a" style="left:562px;top:148px" width="17" height="16" viewBox="0 0 17 16"><rect x="6" y="0" width="10" height="9" rx="1" fill="#9a9a9a"/><rect x="0" y="6" width="10" height="9" rx="1" fill="#7a7a7a"/></svg>
<div class="a" style="left:587px;top:147px;width:1px;height:17px;background:#a8a8a8"></div>
<svg class="a" style="left:597px;top:148px" width="16" height="15" viewBox="0 0 16 15"><path d="M4 5c6-2 10 1 10 6" fill="none" stroke="#2050d8" stroke-width="2.4"/><path d="M0 1v8h8z" fill="#2050d8"/></svg>
<svg class="a" style="left:619px;top:148px" width="16" height="15" viewBox="0 0 16 15"><path d="M12 5c-6-2-10 1-10 6" fill="none" stroke="#9a9a9a" stroke-width="2.4"/><path d="M16 1v8h-8z" fill="#9a9a9a"/></svg>
<div class="a" style="left:645px;top:147px;width:1px;height:17px;background:#a8a8a8"></div>
<div class="a" style="left:653px;top:147px;width:16px;height:16px;background:#f6c84a;border:1px solid #333;font-size:9px;font-weight:bold;line-height:14px;text-align:center;color:#000">Co</div>
<div class="a" style="left:676px;top:147px;width:16px;height:16px;background:#f6c84a;border:1px solid #333;font-size:9px;font-weight:bold;line-height:14px;text-align:center;color:#000">GF</div>
<div class="a" style="left:698px;top:147px;width:16px;height:16px;background:#f6c84a;border:1px solid #333;font-size:9px;font-weight:bold;line-height:14px;text-align:center;color:#000">SF</div>
<div class="a" style="left:720px;top:147px;width:16px;height:16px;background:#f6c84a;border:1px solid #333;font-size:9px;font-weight:bold;line-height:14px;text-align:center;color:#000">L</div>
<div class="a" style="left:745px;top:147px;width:1px;height:17px;background:#a8a8a8"></div>
<div class="a" style="left:752px;top:144px;width:22px;height:22px;background:#fff;border:1px solid #7fa3cf"></div>
<svg class="a" style="left:756px;top:148px" width="14" height="14" viewBox="0 0 14 14"><rect x="0.5" y="0.5" width="13" height="13" fill="#fff" stroke="#000"/></svg>
<svg class="a" style="left:777px;top:148px" width="16" height="14" viewBox="0 0 16 14"><rect x="0.5" y="0.5" width="15" height="13" fill="#fff" stroke="#000"/><path d="M8 0v14" stroke="#000"/></svg>
<svg class="a" style="left:799px;top:148px" width="17" height="14" viewBox="0 0 17 14"><rect x="0.5" y="0.5" width="16" height="13" fill="#fff" stroke="#000"/><path d="M6 0v14M11 0v14" stroke="#000"/></svg>
<div class="a" style="left:824px;top:147px;width:1px;height:17px;background:#a8a8a8"></div>
<svg class="a" style="left:833px;top:148px" width="17" height="17" viewBox="0 0 17 17"><circle cx="7" cy="7" r="5.5" fill="#e8f0ff" stroke="#1a2a60" stroke-width="1.5"/><path d="M11 11l5 5" stroke="#1a2a60" stroke-width="2.5"/><path d="M4 7h6M7 4v6" stroke="#1a3aa0" stroke-width="1.6"/></svg>
<svg class="a" style="left:855px;top:148px" width="17" height="17" viewBox="0 0 17 17"><circle cx="7" cy="7" r="5.5" fill="#e8f0ff" stroke="#1a2a60" stroke-width="1.5"/><path d="M11 11l5 5" stroke="#1a2a60" stroke-width="2.5"/><path d="M4 7h6" stroke="#1a3aa0" stroke-width="1.6"/></svg>
<div class="a" style="left:881px;top:147px;width:1px;height:17px;background:#a8a8a8"></div>
<svg class="a" style="left:890px;top:147px" width="18" height="18" viewBox="0 0 18 18"><path d="M5 11l8-9 3 3-8 9h-3z" fill="#fff" stroke="#555"/><rect x="1" y="14" width="16" height="3" fill="#ffee00"/></svg>
<svg class="a" style="left:912px;top:147px" width="17" height="17" viewBox="0 0 17 17"><rect x="0" y="0" width="17" height="17" fill="#f4f8ff" stroke="#aab"/><text x="2" y="7" font-size="6" font-family="Liberation Sans" fill="#223">4 1 2</text><text x="2" y="14" font-size="6" font-family="Liberation Sans" fill="#223">3 3 4</text></svg>
<svg class="a" style="left:934px;top:147px" width="17" height="17" viewBox="0 0 17 17"><rect x="0" y="0" width="17" height="17" fill="#f0e8c0"/><rect x="8" y="8" width="8" height="8" fill="#fff" stroke="#000"/><path d="M2 4h4M4 2v5" stroke="#333"/></svg>
<div class="a" style="left:960px;top:147px;width:1px;height:17px;background:#a8a8a8"></div>
<svg class="a" style="left:969px;top:147px" width="19" height="19" viewBox="0 0 19 19"><rect x="0.5" y="1.5" width="4" height="4" fill="#ffe08a" stroke="#000"/><rect x="0.5" y="7.5" width="4" height="4" fill="#ffe08a" stroke="#000"/><rect x="10.5" y="1.5" width="4" height="4" fill="#ffe08a" stroke="#000"/><path d="M5 3.5h5M15 3.5h3" stroke="#e00"/><text x="6" y="18" font-size="7" font-family="Liberation Sans" font-weight="bold" fill="#000">SIM</text></svg>
<svg class="a" style="left:992px;top:147px" width="17" height="18" viewBox="0 0 17 18"><rect x="0" y="2" width="12" height="12" fill="#8896aa"/><rect x="5" y="8" width="11" height="9" fill="#55aa55" stroke="#000"/><rect x="8" y="11" width="5" height="3" fill="#000"/></svg>
<div class="a" style="left:1017px;top:147px;width:1px;height:17px;background:#a8a8a8"></div>
<div class="a" style="left:1024px;top:144px;width:22px;height:22px;background:#fff;border:1px solid #7fa3cf"></div>
<svg class="a" style="left:1028px;top:148px" width="15" height="15" viewBox="0 0 15 15"><path d="M1 14h4v-4h3v-4h3v-4h3" fill="none" stroke="#000" stroke-width="1.4" stroke-dasharray="2 1"/></svg>
<svg class="a" style="left:1050px;top:148px" width="16" height="16" viewBox="0 0 16 16"><rect x="0" y="0" width="16" height="16" fill="#2a3450"/><path d="M8 2v9M4 7l4 4 4-4" fill="none" stroke="#fff" stroke-width="2"/><rect x="2" y="13" width="12" height="2" fill="#fff"/></svg>
<svg class="a" style="left:1071px;top:148px" width="16" height="16" viewBox="0 0 16 16"><rect x="0" y="0" width="16" height="16" fill="#2a3450"/><path d="M8 14V5M4 9l4-4 4 4" fill="none" stroke="#fff" stroke-width="2"/><rect x="2" y="1" width="12" height="2" fill="#fff"/></svg>
<div class="a" style="left:312px;top:199px;width:1583px;height:746px;background:#fff;overflow:hidden">
<svg class="a" style="left:-312px;top:-199px" width="1920" height="1020" viewBox="0 0 1920 1020" shape-rendering="crispEdges">
<defs><pattern id="grid" x="336" y="229" width="25" height="25" patternUnits="userSpaceOnUse"><rect x="0" y="0" width="1" height="1" fill="#000"/></pattern></defs>
<rect x="312" y="199" width="1583" height="746" fill="url(#grid)"/>
<rect x="719" y="431" width="145" height="5" fill="#c0c0c0"/>
<rect x="859" y="431" width="5" height="190" fill="#c0c0c0"/>
<rect x="859" y="616" width="113" height="5" fill="#c0c0c0"/>
<rect x="719" y="781" width="145" height="5" fill="#c0c0c0"/>
<rect x="859" y="651" width="5" height="135" fill="#c0c0c0"/>
<rect x="859" y="651" width="113" height="5" fill="#c0c0c0"/>
<rect x="1244" y="581" width="95" height="5" fill="#c0c0c0"/>
<rect x="1334" y="466" width="5" height="120" fill="#c0c0c0"/>
<rect x="1334" y="466" width="71" height="5" fill="#c0c0c0"/>
<rect x="350" y="262" width="62" height="88" fill="#000"/><rect x="352" y="265" width="58" height="82" fill="#ffeb95"/><rect x="353" y="266" width="56" height="80" fill="#fede8b"/>
<text x="357.00" y="256" font-size="26" fill="#000" font-family="Liberation Sans" textLength="32.00" lengthAdjust="spacingAndGlyphs" >AI1</text>
<text x="366.00" y="309" font-size="31" fill="#000" font-family="Liberation Sans" textLength="26.97" lengthAdjust="spacingAndGlyphs" >AI</text>
<rect x="412" y="299" width="142" height="5" fill="#000"/>
<text x="523" y="299" font-size="14" fill="#000" text-anchor="start" font-family="Liberation Sans" >Ax</text>
<text x="519" y="349" font-size="14" fill="#000" text-anchor="start" font-family="Liberation Sans" >Par</text>
<rect x="535" y="350" width="15" height="3" fill="#2a9a2a"/>
<rect x="550" y="287" width="62" height="88" fill="#000"/><rect x="552" y="290" width="58" height="82" fill="#ffeb95"/><rect x="553" y="291" width="56" height="80" fill="#fede8b"/>
<text x="545.94" y="281" font-size="26" fill="#000" font-family="Liberation Sans" textLength="59.56" lengthAdjust="spacingAndGlyphs" >B002</text>
<text x="564.00" y="326" font-size="30" fill="#000" font-family="Liberation Sans" textLength="19.51" lengthAdjust="spacingAndGlyphs" >A</text>
<path d="M586 316h15M594 308l8 8-8 8" fill="none" stroke="#000" stroke-width="2.5" shape-rendering="auto"/>
<path d="M562 341h9M581 341h8M571 331v21l10-10.5z" fill="none" stroke="#000" stroke-width="2.5" shape-rendering="auto"/>
<rect x="612" y="324" width="114" height="5" fill="#000"/>
<rect x="725" y="287" width="62" height="88" fill="#000"/><rect x="727" y="290" width="58" height="82" fill="#ffeb95"/><rect x="728" y="291" width="56" height="80" fill="#fede8b"/>
<text x="727.00" y="281" font-size="26" fill="#000" font-family="Liberation Sans" textLength="47.31" lengthAdjust="spacingAndGlyphs" >AM1</text>
<text x="741.00" y="334" font-size="31" fill="#000" font-family="Liberation Sans" textLength="44.39" lengthAdjust="spacingAndGlyphs" >AM</text>
<rect x="787" y="324" width="19" height="5" fill="#000"/>
<rect x="571" y="383" width="23" height="23" fill="#7a7a7a"/><rect x="573" y="386" width="18" height="17" fill="#f4f6f7"/><rect x="574" y="398" width="16" height="4" fill="#dcdcdc"/><rect x="574" y="396" width="16" height="2" fill="#e8e8e6"/><rect x="576" y="394" width="13" height="2" fill="#203a90"/>
<rect x="457" y="415" width="247" height="3" fill="#979797"/>
<rect x="457" y="450" width="247" height="3" fill="#979797"/>
<rect x="457" y="415" width="2" height="38" fill="#979797"/>
<rect x="702" y="415" width="2" height="38" fill="#979797"/>
<rect x="577" y="415" width="2" height="38" fill="#979797"/>
<text x="537.20" y="444" font-size="25.5" fill="#1a3ac0" font-family="Liberation Sans" textLength="33.22" lengthAdjust="spacingAndGlyphs" >Ax:</text>
<text x="584.70" y="444" font-size="25.5" fill="#1a3ac0" font-family="Liberation Sans" textLength="56.62" lengthAdjust="spacingAndGlyphs" >3580</text>
<rect x="704" y="431" width="16" height="5" fill="#000"/>
<text x="551" y="484" font-size="25" fill="#186818" text-anchor="start" font-family="Liberation Sans" >Gain&#160;&#160;=10.0+</text>
<text x="551" y="519" font-size="25" fill="#186818" text-anchor="start" font-family="Liberation Sans" >Offset=0</text>
<text x="551" y="554" font-size="25" fill="#186818" text-anchor="start" font-family="Liberation Sans" >Point =0</text>
<rect x="350" y="612" width="62" height="88" fill="#000"/><rect x="352" y="615" width="58" height="82" fill="#ffeb95"/><rect x="353" y="616" width="56" height="80" fill="#fede8b"/>
<text x="357.00" y="606" font-size="26" fill="#000" font-family="Liberation Sans" textLength="34.07" lengthAdjust="spacingAndGlyphs" >AI2</text>
<text x="366.00" y="659" font-size="31" fill="#000" font-family="Liberation Sans" textLength="26.97" lengthAdjust="spacingAndGlyphs" >AI</text>
<rect x="412" y="649" width="142" height="5" fill="#000"/>
<text x="523" y="649" font-size="14" fill="#000" text-anchor="start" font-family="Liberation Sans" >Ax</text>
<text x="519" y="699" font-size="14" fill="#000" text-anchor="start" font-family="Liberation Sans" >Par</text>
<rect x="535" y="700" width="15" height="3" fill="#2a9a2a"/>
<rect x="550" y="637" width="62" height="88" fill="#000"/><rect x="552" y="640" width="58" height="82" fill="#ffeb95"/><rect x="553" y="641" width="56" height="80" fill="#fede8b"/>
<text x="545.95" y="631" font-size="26" fill="#000" font-family="Liberation Sans" textLength="59.35" lengthAdjust="spacingAndGlyphs" >B003</text>
<text x="564.00" y="676" font-size="30" fill="#000" font-family="Liberation Sans" textLength="19.51" lengthAdjust="spacingAndGlyphs" >A</text>
<path d="M586 666h15M594 658l8 8-8 8" fill="none" stroke="#000" stroke-width="2.5" shape-rendering="auto"/>
<path d="M562 691h9M581 691h8M571 681v21l10-10.5z" fill="none" stroke="#000" stroke-width="2.5" shape-rendering="auto"/>
<rect x="612" y="674" width="114" height="5" fill="#000"/>
<rect x="725" y="637" width="62" height="88" fill="#000"/><rect x="727" y="640" width="58" height="82" fill="#ffeb95"/><rect x="728" y="641" width="56" height="80" fill="#fede8b"/>
<text x="727.00" y="631" font-size="26" fill="#000" font-family="Liberation Sans" textLength="48.13" lengthAdjust="spacingAndGlyphs" >AM2</text>
<text x="741.00" y="684" font-size="31" fill="#000" font-family="Liberation Sans" textLength="44.39" lengthAdjust="spacingAndGlyphs" >AM</text>
<rect x="787" y="674" width="19" height="5" fill="#000"/>
<rect x="571" y="733" width="23" height="23" fill="#7a7a7a"/><rect x="573" y="736" width="18" height="17" fill="#f4f6f7"/><rect x="574" y="748" width="16" height="4" fill="#dcdcdc"/><rect x="574" y="746" width="16" height="2" fill="#e8e8e6"/><rect x="576" y="744" width="13" height="2" fill="#203a90"/>
<rect x="457" y="765" width="247" height="3" fill="#979797"/>
<rect x="457" y="800" width="247" height="3" fill="#979797"/>
<rect x="457" y="765" width="2" height="38" fill="#979797"/>
<rect x="702" y="765" width="2" height="38" fill="#979797"/>
<rect x="577" y="765" width="2" height="38" fill="#979797"/>
<text x="537.20" y="794" font-size="25.5" fill="#1a3ac0" font-family="Liberation Sans" textLength="33.22" lengthAdjust="spacingAndGlyphs" >Ax:</text>
<text x="584.60" y="794" font-size="25.5" fill="#1a3ac0" font-family="Liberation Sans" textLength="56.73" lengthAdjust="spacingAndGlyphs" >5160</text>
<rect x="704" y="781" width="16" height="5" fill="#000"/>
<text x="551" y="834" font-size="25" fill="#186818" text-anchor="start" font-family="Liberation Sans" >Gain&#160;&#160;=10.0+</text>
<text x="551" y="869" font-size="25" fill="#186818" text-anchor="start" font-family="Liberation Sans" >Offset=0</text>
<text x="551" y="904" font-size="25" fill="#186818" text-anchor="start" font-family="Liberation Sans" >Point =0</text>
<rect x="925" y="412" width="62" height="88" fill="#000"/><rect x="927" y="415" width="58" height="82" fill="#ffeb95"/><rect x="928" y="416" width="56" height="80" fill="#fede8b"/>
<text x="925.44" y="406" font-size="26" fill="#000" font-family="Liberation Sans" textLength="52.50" lengthAdjust="spacingAndGlyphs" >High</text>
<text x="943.92" y="449" font-size="30" fill="#000" font-family="Liberation Sans" textLength="24.31" lengthAdjust="spacingAndGlyphs" stroke="#000" stroke-width="0.7">hi</text>
<rect x="987" y="450" width="89" height="3" fill="#000"/>
<text x="1049" y="448" font-size="14" fill="#000" text-anchor="start" font-family="Liberation Sans" >En</text>
<text x="1044" y="498" font-size="14" fill="#000" text-anchor="start" font-family="Liberation Sans" >Par</text>
<rect x="1060" y="500" width="15" height="3" fill="#2a9a2a"/>
<rect x="1075" y="437" width="62" height="88" fill="#000"/><rect x="1077" y="440" width="58" height="82" fill="#ffeb95"/><rect x="1078" y="441" width="56" height="80" fill="#fede8b"/>
<text x="1070.97" y="431" font-size="26" fill="#000" font-family="Liberation Sans" textLength="58.73" lengthAdjust="spacingAndGlyphs" >B004</text>
<path d="M1087 459h16M1094 450v18M1107 456.5h17M1107 461.5h17" fill="none" stroke="#000" stroke-width="3"/>
<text x="1086.00" y="499" font-size="31" fill="#000" font-family="Liberation Sans" textLength="18.98" lengthAdjust="spacingAndGlyphs" >A</text>
<path d="M1110 489h16M1118 481l8 8-8 8" fill="none" stroke="#000" stroke-width="2.8" shape-rendering="auto"/>
<rect x="1137" y="474" width="64" height="5" fill="#000"/>
<rect x="1200" y="437" width="62" height="88" fill="#000"/><rect x="1202" y="440" width="58" height="82" fill="#ffeb95"/><rect x="1203" y="441" width="56" height="80" fill="#fede8b"/>
<text x="1202.00" y="431" font-size="26" fill="#000" font-family="Liberation Sans" textLength="47.95" lengthAdjust="spacingAndGlyphs" >AM3</text>
<text x="1216.00" y="484" font-size="31" fill="#000" font-family="Liberation Sans" textLength="44.39" lengthAdjust="spacingAndGlyphs" >AM</text>
<rect x="1262" y="474" width="19" height="5" fill="#000"/>
<rect x="1096" y="533" width="23" height="23" fill="#7a7a7a"/><rect x="1098" y="536" width="18" height="17" fill="#f4f6f7"/><rect x="1099" y="548" width="16" height="4" fill="#dcdcdc"/><rect x="1099" y="546" width="16" height="2" fill="#e8e8e6"/><rect x="1101" y="544" width="13" height="2" fill="#203a90"/>
<rect x="982" y="565" width="247" height="3" fill="#979797"/>
<rect x="982" y="740" width="247" height="3" fill="#979797"/>
<rect x="982" y="565" width="2" height="178" fill="#979797"/>
<rect x="1227" y="565" width="2" height="178" fill="#979797"/>
<rect x="1102" y="565" width="2" height="178" fill="#979797"/>
<rect x="982" y="600" width="247" height="3" fill="#979797"/>
<rect x="982" y="635" width="247" height="3" fill="#979797"/>
<rect x="982" y="670" width="247" height="3" fill="#979797"/>
<rect x="982" y="705" width="247" height="3" fill="#979797"/>
<text x="1060.00" y="594" font-size="25.5" fill="#1a3ac0" font-family="Liberation Sans" textLength="36.57" lengthAdjust="spacingAndGlyphs" >Aq:</text>
<text x="1110.50" y="594" font-size="25.5" fill="#1a3ac0" font-family="Liberation Sans" textLength="56.52" lengthAdjust="spacingAndGlyphs" >8740</text>
<text x="1058.82" y="629" font-size="25.5" fill="#1a3ac0" font-family="Liberation Sans" textLength="37.82" lengthAdjust="spacingAndGlyphs" >P1:</text>
<text x="1110.71" y="629" font-size="25.5" fill="#1a3ac0" font-family="Liberation Sans" textLength="56.31" lengthAdjust="spacingAndGlyphs" >3580</text>
<text x="1058.82" y="664" font-size="25.5" fill="#1a3ac0" font-family="Liberation Sans" textLength="37.82" lengthAdjust="spacingAndGlyphs" >P2:</text>
<text x="1110.61" y="664" font-size="25.5" fill="#1a3ac0" font-family="Liberation Sans" textLength="56.41" lengthAdjust="spacingAndGlyphs" >5160</text>
<text x="1058.82" y="699" font-size="25.5" fill="#1a3ac0" font-family="Liberation Sans" textLength="37.82" lengthAdjust="spacingAndGlyphs" >P3:</text>
<text x="1111.44" y="699" font-size="25.5" fill="#1a3ac0" font-family="Liberation Sans" textLength="13.49" lengthAdjust="spacingAndGlyphs" >0</text>
<text x="1058.82" y="734" font-size="25.5" fill="#1a3ac0" font-family="Liberation Sans" textLength="37.82" lengthAdjust="spacingAndGlyphs" >P4:</text>
<text x="1111.44" y="734" font-size="25.5" fill="#1a3ac0" font-family="Liberation Sans" textLength="13.49" lengthAdjust="spacingAndGlyphs" >0</text>
<rect x="1229" y="581" width="16" height="5" fill="#000"/>
<rect x="971" y="616" width="15" height="5" fill="#000"/>
<rect x="971" y="651" width="15" height="5" fill="#000"/>
<rect x="966" y="686" width="20" height="5" fill="#000"/>
<rect x="966" y="721" width="20" height="5" fill="#000"/>
<text x="1076" y="774" font-size="25" fill="#186818" text-anchor="start" font-family="Liberation Sans" >V1=B2+</text>
<text x="1076" y="809" font-size="25" fill="#186818" text-anchor="start" font-family="Liberation Sans" >V2=B3</text>
<text x="1076" y="844" font-size="25" fill="#186818" text-anchor="start" font-family="Liberation Sans" >V3=0</text>
<text x="1076" y="879" font-size="25" fill="#186818" text-anchor="start" font-family="Liberation Sans" >V4=0</text>
<text x="1076" y="914" font-size="25" fill="#186818" text-anchor="start" font-family="Liberation Sans" >Point=0</text>
<text x="1076" y="949" font-size="25" fill="#186818" text-anchor="start" font-family="Liberation Sans" >((B2+B3)+0)+0</text>
<rect x="1275" y="262" width="62" height="88" fill="#000"/><rect x="1277" y="265" width="58" height="82" fill="#ffeb95"/><rect x="1278" y="266" width="56" height="80" fill="#fede8b"/>
<text x="1275.44" y="256" font-size="26" fill="#000" font-family="Liberation Sans" textLength="52.50" lengthAdjust="spacingAndGlyphs" >High</text>
<text x="1293.92" y="299" font-size="30" fill="#000" font-family="Liberation Sans" textLength="24.31" lengthAdjust="spacingAndGlyphs" stroke="#000" stroke-width="0.7">hi</text>
<rect x="1337" y="300" width="189" height="3" fill="#000"/>
<text x="1499" y="299" font-size="14" fill="#000" text-anchor="start" font-family="Liberation Sans" >En</text>
<text x="1496" y="323" font-size="14" fill="#000" text-anchor="start" font-family="Liberation Sans" >Inv</text>
<text x="1494" y="349" font-size="14" fill="#000" text-anchor="start" font-family="Liberation Sans" >Par</text>
<rect x="1510" y="325" width="15" height="3" fill="#000"/>
<rect x="1510" y="350" width="15" height="3" fill="#2a9a2a"/>
<rect x="1525" y="287" width="62" height="88" fill="#000"/><rect x="1527" y="290" width="58" height="82" fill="#ffeb95"/><rect x="1528" y="291" width="56" height="80" fill="#fede8b"/>
<text x="1521.02" y="281" font-size="26" fill="#000" font-family="Liberation Sans" textLength="57.12" lengthAdjust="spacingAndGlyphs" >B001</text>
<path d="M1532 348h4v-22h5v22h10v-22v22h10v-22h5v22h10v-22v22h3" fill="none" stroke="#000" stroke-width="2.6"/>
<rect x="1587" y="325" width="114" height="3" fill="#000"/>
<rect x="1700" y="287" width="62" height="88" fill="#000"/><rect x="1702" y="290" width="58" height="82" fill="#ffeb95"/><rect x="1703" y="291" width="56" height="80" fill="#fede8b"/>
<text x="1708.95" y="281" font-size="26" fill="#000" font-family="Liberation Sans" textLength="30.48" lengthAdjust="spacingAndGlyphs" >Q1</text>
<text x="1723.62" y="333" font-size="31" fill="#000" font-family="Liberation Sans" textLength="23.77" lengthAdjust="spacingAndGlyphs" >Q</text>
<rect x="1762" y="325" width="18" height="3" fill="#000"/>
<rect x="1546" y="383" width="23" height="23" fill="#7a7a7a"/><rect x="1548" y="386" width="18" height="17" fill="#f4f6f7"/><rect x="1549" y="398" width="16" height="4" fill="#dcdcdc"/><rect x="1549" y="396" width="16" height="2" fill="#e8e8e6"/><rect x="1551" y="394" width="13" height="2" fill="#203a90"/>
<rect x="1415" y="415" width="282" height="3" fill="#979797"/>
<rect x="1415" y="520" width="282" height="3" fill="#979797"/>
<rect x="1415" y="415" width="2" height="108" fill="#979797"/>
<rect x="1695" y="415" width="2" height="108" fill="#979797"/>
<rect x="1552" y="415" width="2" height="108" fill="#979797"/>
<rect x="1415" y="450" width="282" height="3" fill="#979797"/>
<rect x="1415" y="485" width="282" height="3" fill="#979797"/>
<text x="1508.28" y="444" font-size="25.5" fill="#1a3ac0" font-family="Liberation Sans" textLength="35.43" lengthAdjust="spacingAndGlyphs" >Ta:</text>
<text x="1557.91" y="444" font-size="25.5" fill="#1a3ac0" font-family="Liberation Sans" textLength="75.95" lengthAdjust="spacingAndGlyphs" >01:07s</text>
<text x="1505.52" y="479" font-size="25.5" fill="#1a3ac0" font-family="Liberation Sans" textLength="39.04" lengthAdjust="spacingAndGlyphs" >TH:</text>
<text x="1558.70" y="479" font-size="25.5" fill="#1a3ac0" font-family="Liberation Sans" textLength="90.92" lengthAdjust="spacingAndGlyphs" >8740ms</text>
<text x="1508.32" y="514" font-size="25.5" fill="#1a3ac0" font-family="Liberation Sans" textLength="35.11" lengthAdjust="spacingAndGlyphs" >TL:</text>
<text x="1557.91" y="514" font-size="25.5" fill="#1a3ac0" font-family="Liberation Sans" textLength="75.95" lengthAdjust="spacingAndGlyphs" >02:00s</text>
<rect x="1697" y="431" width="20" height="5" fill="#000"/>
<rect x="1404" y="466" width="15" height="5" fill="#000"/>
<rect x="1399" y="501" width="20" height="5" fill="#000"/>
<path d="M1663 465h31l-15.5 13z" fill="#1c1c1c" shape-rendering="auto"/>
<text x="1526" y="554" font-size="25" fill="#186818" text-anchor="start" font-family="Liberation Sans" >Rem = off</text>
<text x="1526" y="589" font-size="25" fill="#186818" text-anchor="start" font-family="Liberation Sans" >B4ms+</text>
<text x="1526" y="624" font-size="25" fill="#186818" text-anchor="start" font-family="Liberation Sans" >02:00s</text>
</svg></div>
<div class="a" style="left:1895px;top:199px;width:25px;height:746px;background:#f0f0f0"></div>
<div class="a" style="left:1895px;top:200px;width:24px;height:23px;background:#f0f0f0;border:1px solid #a2a2a2"></div>
<svg class="a" style="left:1895px;top:200px" width="24" height="23"><path transform="translate(10.8 10.5)" d="M-3.5 1.8L0 -1.8L3.5 1.8" fill="none" stroke="#000" stroke-width="2.4"/></svg>
<div class="a" style="left:1895px;top:250px;width:24px;height:204px;background:#f0f0f0;border:1px solid #a2a2a2"></div>
<div class="a" style="left:1903px;top:348px;width:8px;height:1px;background:#bdbdbd"></div>
<div class="a" style="left:1903px;top:350px;width:8px;height:1px;background:#bdbdbd"></div>
<div class="a" style="left:1903px;top:352px;width:8px;height:1px;background:#bdbdbd"></div>
<div class="a" style="left:1903px;top:354px;width:8px;height:1px;background:#bdbdbd"></div>
<div class="a" style="left:1895px;top:920px;width:24px;height:23px;background:#f0f0f0;border:1px solid #a2a2a2"></div>
<svg class="a" style="left:1895px;top:920px" width="24" height="23"><path transform="translate(10.8 10.5)" d="M-3.5 -1.8L0 1.8L3.5 -1.8" fill="none" stroke="#000" stroke-width="2.4"/></svg>
<div class="a" style="left:312px;top:945px;width:1608px;height:25px;background:#f0f0f0"></div>
<div class="a" style="left:313px;top:945px;width:23px;height:24px;background:#f0f0f0;border:1px solid #a2a2a2"></div>
<svg class="a" style="left:313px;top:945px" width="23" height="24"><path transform="translate(10.3 11.0)" d="M1.8 -3.5L-1.8 0L1.8 3.5" fill="none" stroke="#000" stroke-width="2.4"/></svg>
<div class="a" style="left:348px;top:945px;width:617px;height:25px;background:#f0f0f0;border:1px solid #a2a2a2"></div>
<div class="a" style="left:652px;top:953px;width:1px;height:8px;background:#bdbdbd"></div>
<div class="a" style="left:654px;top:953px;width:1px;height:8px;background:#bdbdbd"></div>
<div class="a" style="left:656px;top:953px;width:1px;height:8px;background:#bdbdbd"></div>
<div class="a" style="left:658px;top:953px;width:1px;height:8px;background:#bdbdbd"></div>
<div class="a" style="left:1870px;top:945px;width:23px;height:24px;background:#f0f0f0;border:1px solid #a2a2a2"></div>
<svg class="a" style="left:1870px;top:945px" width="23" height="24"><path transform="translate(10.3 11.0)" d="M-1.8 -3.5L1.8 0L-1.8 3.5" fill="none" stroke="#000" stroke-width="2.4"/></svg>
<div class="a" style="left:312px;top:970px;width:1608px;height:4px;background:#e8e8e8"></div>
<div class="a" style="left:312px;top:974px;width:1608px;height:25px;background:#adadad;border-top:1px solid #a0a0a0"></div>
<div class="a" style="left:317px;top:978px;white-space:nowrap;font-size:13.3px;font-weight:bold;color:#f4f4f4;line-height:16px">Info Window</div>
<svg class="a" style="left:1877px;top:978px" width="17" height="15" viewBox="0 0 17 15"><path d="M2 10l8-8 5 4-8 8z" fill="#3a50c8"/><path d="M1 11l5-5 5 4-5 5z" fill="#c8d0f0"/></svg>
<svg class="a" style="left:1904px;top:980px" width="10" height="10" viewBox="0 0 10 10"><path d="M1 1L9 9M9 1L1 9" stroke="#f4f4f4" stroke-width="2"/></svg>
</body></html>
